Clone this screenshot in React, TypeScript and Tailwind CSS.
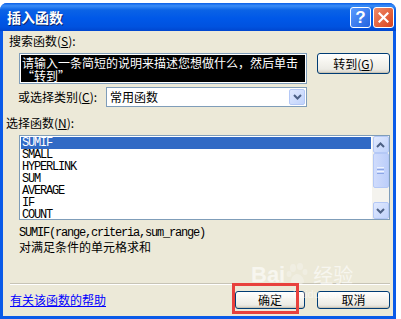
import React from "react";

const cjk = "font-['SimSun','Noto_Sans_CJK_SC',sans-serif]";
const mono = "font-['Liberation_Mono','Noto_Sans_CJK_SC',monospace]";

function XPButton({ children, w }: { children: React.ReactNode; w: string }) {
  return (
    <div
      className={`${w} h-full flex items-center justify-center rounded-[3px] border border-[#003c74] bg-[linear-gradient(to_bottom,#ffffff_0%,#f6f5f0_40%,#ecebe5_80%,#d6d0c5_100%)] shadow-[inset_0_-1px_0_#c9c4b5] text-[12px] leading-[12px] text-black ${cjk}`}
    >
      {children}
    </div>
  );
}

function Chevron({ up }: { up?: boolean }) {
  return (
    <svg width="9" height="6" viewBox="0 0 9 6">
      <path
        d={up ? "M1 5 L4.5 1.5 L8 5" : "M1 1 L4.5 4.5 L8 1"}
        fill="none"
        stroke="#4d6185"
        strokeWidth="2"
      />
    </svg>
  );
}

function ScrollBtn({ up }: { up?: boolean }) {
  return (
    <div className="w-[16px] h-[17px] rounded-[2px] border border-[#b4c8f6] bg-[linear-gradient(to_bottom_right,#e0e9fe,#c1d3fb)] flex items-center justify-center">
      <Chevron up={up} />
    </div>
  );
}

const items = ["SUMIF", "SMALL", "HYPERLINK", "SUM", "AVERAGE", "IF", "COUNT"];

export default function App() {
  return (
    <div className="w-[401px] h-[319px] bg-white relative overflow-hidden">
      <div className="mt-[3px] w-[396px] h-[316px] flex flex-col rounded-t-[7px] bg-[#0a5ae8] overflow-hidden">
        {/* title bar */}
        <div className="h-[28px] flex items-center bg-[linear-gradient(to_bottom,#0a5fe8_0%,#3a8cf6_10%,#0b63e6_25%,#0058e8_55%,#0052df_85%,#0046cf_100%)]">
          <div
            className={`ml-[7px] text-white text-[14px] leading-[14px] font-bold ${cjk} [text-shadow:1px_1px_0_#0a246a]`}
          >
            插入函数
          </div>
          <div className="ml-auto mr-[2px] flex gap-[2px]">
            <div className="w-[21px] h-[21px] rounded-[3px] border border-white bg-[linear-gradient(to_bottom_right,#5b9bff,#2463e0)] flex items-center justify-center text-white font-bold text-[17px] leading-[17px] font-['Liberation_Sans',sans-serif]">
              ?
            </div>
            <div className="w-[21px] h-[21px] rounded-[3px] border border-white bg-[linear-gradient(to_bottom_right,#f08a68,#d8431e)] flex items-center justify-center">
              <svg width="11" height="11" viewBox="0 0 11 11">
                <path d="M1.5 1.5 L9.5 9.5 M9.5 1.5 L1.5 9.5" stroke="white" strokeWidth="2.2" strokeLinecap="square" />
              </svg>
            </div>
          </div>
        </div>
        {/* body */}
        <div className={`mx-[3px] flex-1 bg-[#ece9d8] relative flex flex-col text-[12px] leading-[12px] text-black ${cjk}`}>
          <div className="mt-[4px] ml-[6px] h-[12px]">
            搜索函数(<span className="underline">S</span>):
          </div>
          <div className="mt-[6px] flex h-[31px] items-start">
            <div className="ml-[16px] w-[288px] h-[31px] border border-[#7f9db9] bg-white p-px">
              <div className="w-full h-full bg-black text-white text-[12px] leading-[13px] pt-[1px] pl-[1px]">
                <div className="whitespace-nowrap">请输入一条简短的说明来描述您想做什么，然后单击</div>
                <div className="whitespace-nowrap">“转到”</div>
              </div>
            </div>
            <div className="ml-[10px] h-[21px]">
              <XPButton w="w-[73px]">
                转到(<span className="underline">G</span>)
              </XPButton>
            </div>
          </div>
          <div className="mt-[3px] flex items-center h-[20px]">
            <div className="ml-[15px] w-[88px]">
              或选择类别(<span className="underline">C</span>):
            </div>
            <div className="w-[201px] h-[20px] border border-[#7f9db9] bg-white flex items-center">
              <div className="pl-[3px] flex-1">常用函数</div>
              <div className="mr-px w-[16px] h-[16px] rounded-[2px] border border-[#b4c8f6] bg-[linear-gradient(to_bottom_right,#e0e9fe,#c1d3fb)] flex items-center justify-center">
                <Chevron />
              </div>
            </div>
          </div>
          <div className="mt-[10px] ml-[3px] h-[12px]">
            选择函数(<span className="underline">N</span>):
          </div>
          <div className="mt-[6px] ml-[16px] w-[371px] h-[85px] border border-[#7f9db9] bg-white flex">
            <div className="flex-1 p-px">
              {items.map((it, i) => (
                <div
                  key={it}
                  className={`h-[12px] pl-[1px] text-[12px] leading-[12px] tracking-[-1.2px] ${mono} ${
                    i === 0 ? "bg-[#316ac5] text-white" : "text-black"
                  }`}
                >
                  {it}
                </div>
              ))}
            </div>
            <div className="w-[17px] bg-[#f4f3ee] flex flex-col items-center">
              <ScrollBtn up />
              <div className="w-[16px] h-[35px] rounded-[2px] border border-[#b4c8f6] bg-[linear-gradient(to_right,#d0dcfc,#bccefa)] flex flex-col items-center justify-center gap-[1px]">
                <div className="w-[7px] h-px bg-[#eef3fe]" />
                <div className="w-[7px] h-px bg-[#8ca6e6]" />
                <div className="w-[7px] h-px bg-[#eef3fe]" />
                <div className="w-[7px] h-px bg-[#8ca6e6]" />
              </div>
              <div className="flex-1" />
              <ScrollBtn />
            </div>
          </div>
          <div className={`mt-[7px] ml-[16px] h-[12px] tracking-[-1.2px] ${mono}`}>
            SUMIF(range,criteria,sum_range)
          </div>
          <div className="mt-[1px] ml-[16px] h-[13px] leading-[13px]">对满足条件的单元格求和</div>
          <div className="mt-[30px] ml-[7px] w-[380px] h-[2px] border-t border-[#c7c4b6] border-b border-b-white" />
          <div className="mt-[5px] flex items-center h-[19px]">
            <div className="ml-[7px] w-[225px] text-[#0000ff] underline">有关该函数的帮助</div>
            <div className="h-[18px]">
              <XPButton w="w-[70px]">确定</XPButton>
            </div>
            <div className="ml-[12px] h-[18px]">
              <XPButton w="w-[73px]">取消</XPButton>
            </div>
          </div>
          {/* watermark */}
          <div className="absolute left-[248px] top-[232px] flex items-end gap-[1px] text-white opacity-60 font-['Liberation_Sans',sans-serif] font-bold text-[22px] leading-[22px] pointer-events-none">
            <span>Bai</span>
            <svg width="26" height="22" viewBox="0 0 26 22" className="mb-[1px]">
              <g fill="#f4f2ea">
                <ellipse cx="7" cy="5" rx="3" ry="4" />
                <ellipse cx="14" cy="3.5" rx="3" ry="3.5" />
                <ellipse cx="3" cy="11" rx="2.5" ry="3" />
                <ellipse cx="19" cy="9" rx="2.5" ry="3" />
                <path d="M5 19 C5 13 9 11 11 11 C14 11 18 14 18 19 C18 22 5 22 5 19 Z" />
              </g>
            </svg>
            <span className={`${cjk} font-normal text-[20px]`}>经验</span>
          </div>
          <div className="absolute left-[252px] top-[258px] text-white opacity-50 font-['Liberation_Sans',sans-serif] text-[11px] leading-[11px] pointer-events-none">
            jingyan.baidu.com
          </div>
          {/* red highlight */}
          <div className="absolute left-[229px] top-[252px] w-[67px] h-[31px] border-[3px] border-[#e8413d]" />
        </div>
        <div className="h-[3px]" />
      </div>
    </div>
  );
}
